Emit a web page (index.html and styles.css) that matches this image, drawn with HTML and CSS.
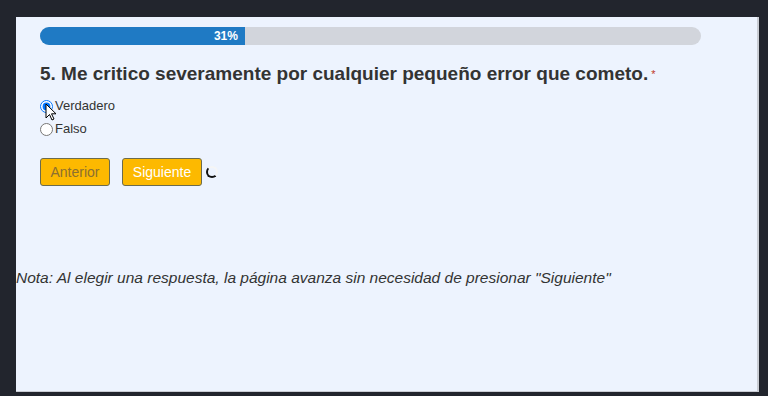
FILE: index.html
```html
<!DOCTYPE html>
<html lang="es">
<head>
  <meta charset="UTF-8">
  <meta name="viewport" content="width=device-width, initial-scale=1.0">
  <title>Cuestionario</title>
  <link rel="stylesheet" href="styles.css">
</head>
<body>
  <div class="panel">
    <div class="progress">
      <div class="progress-fill" style="width: 31%">31%</div>
    </div>

    <h2 class="question">5. Me critico severamente por cualquier pequeño error que cometo.<span class="required">*</span></h2>

    <div class="options">
      <label class="option">
        <input type="radio" name="q5" value="v" checked>
        <span>Verdadero</span>
        <svg class="cursor" width="12" height="19" viewBox="0 0 12 19">
          <path d="M1 1 L1 15 L4.5 11.5 L7 17 L9 16 L6.5 10.8 L11 10.8 Z" fill="#fff" stroke="#000" stroke-width="1" stroke-linejoin="round"/>
        </svg>
      </label>
      <label class="option">
        <input type="radio" name="q5" value="f">
        <span>Falso</span>
      </label>
    </div>

    <div class="actions">
      <button class="btn btn-prev">Anterior</button>
      <button class="btn btn-next">Siguiente</button>
      <span class="spinner"></span>
    </div>

    <p class="note">Nota: Al elegir una respuesta, la página avanza sin necesidad de presionar "Siguiente"</p>
  </div>
</body>
</html>
```

FILE: styles.css
```css
html, body {
  margin: 0;
  height: 100%;
}
body {
  background-color: #22252d;
  font-family: "Liberation Sans", Arial, sans-serif;
  color: #333;
  padding: 17px 0 0 16px;
  box-sizing: border-box;
}
.panel {
  width: 743px;
  height: 375px;
  background-color: #edf3fe;
  border-right: 2px solid #c9ccd3;
  border-bottom: 1px solid #c9ccd3;
  padding: 10px 0 0 24px;
  box-sizing: border-box;
}
.progress {
  width: 661px;
  height: 18px;
  background-color: #d2d5dc;
  border-radius: 9px;
  overflow: hidden;
}
.progress-fill {
  height: 100%;
  background-color: #1f7ac4;
  color: #fff;
  font-size: 12px;
  font-weight: bold;
  line-height: 18px;
  text-align: right;
  padding-right: 7px;
  box-sizing: border-box;
}
.question {
  margin: 17px 0 0;
  font-size: 19px;
  font-weight: bold;
  line-height: 24px;
  color: #333;
}
.required {
  color: #c0392b;
  font-size: 11px;
  font-weight: normal;
  margin-left: 3px;
  vertical-align: top;
}
.options {
  margin-top: 12px;
  display: flex;
  flex-direction: column;
  gap: 7px;
}
.option {
  position: relative;
  display: flex;
  align-items: center;
  font-size: 13px;
  line-height: 16px;
  color: #333;
}
.option input {
  margin: 0 2px 0 0;
  width: 13px;
  height: 13px;
}
.cursor {
  position: absolute;
  left: 5px;
  top: 5px;
}
.actions {
  margin-top: 21px;
  display: flex;
  align-items: center;
  gap: 12px;
}
.btn {
  height: 28px;
  padding: 0 8px;
  font-family: "Liberation Sans", Arial, sans-serif;
  font-size: 14px;
  background-color: #fdb900;
  border: 1px solid #6b6b4e;
  border-radius: 3px;
  cursor: pointer;
}
.btn-prev {
  width: 70px;
  color: #8c7030;
}
.btn-next {
  width: 80px;
  color: #fff;
}
.spinner {
  width: 8px;
  height: 8px;
  margin-left: -8px;
  border: 2px solid #f5f5f5;
  border-left-color: #111;
  border-bottom-color: #111;
  border-radius: 50%;
}
.note {
  margin: 83px 0 0 -24px;
  font-size: 15.5px;
  font-style: italic;
  color: #333;
}
```
